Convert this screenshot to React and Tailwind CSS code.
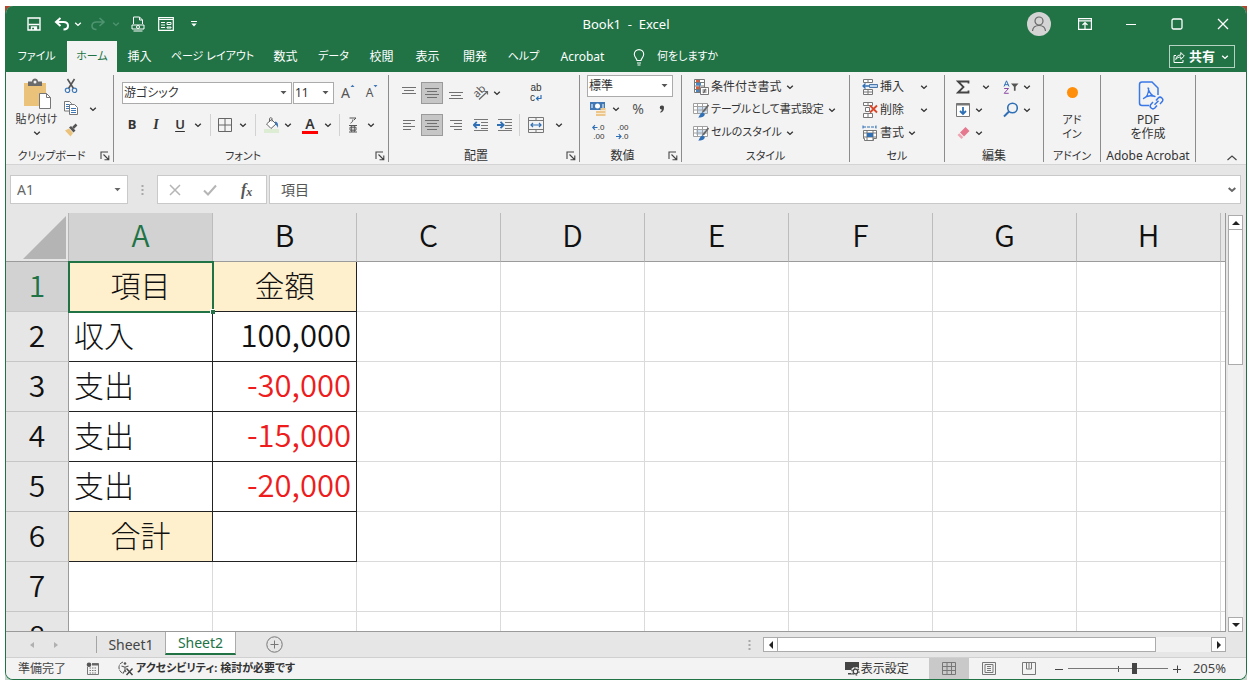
import React from "react";

const KANA = "[font-feature-settings:'palt']";

function Chevron({ className = "" }) {
  return (
    <svg className={`h-3 w-3 shrink-0 ${className}`} viewBox="0 0 12 12" fill="none" stroke="currentColor" strokeWidth="1.4" aria-hidden="true">
      <path d="M3.2 4.8 6 7.4 8.8 4.8" />
    </svg>
  );
}

function IconButton({ label, className = "w-5", children }) {
  return (
    <button type="button" aria-label={label} className={`flex h-[22px] shrink-0 items-center justify-center ${className}`}>
      {children}
    </button>
  );
}

function Drop({ label, className = "" }) {
  return (
    <IconButton label={label} className={`w-3 ${className}`}>
      <Chevron />
    </IconButton>
  );
}

function Icon({ w = 16, h = 16, className = "", children }) {
  return (
    <svg className={`shrink-0 ${className}`} width={w} height={h} viewBox={`0 0 ${w} ${h}`} fill="none" aria-hidden="true">
      {children}
    </svg>
  );
}

function Combo({ label, value, className }) {
  return (
    <span className={`relative flex h-[22px] items-center border border-[#ababab] bg-white ${className}`}>
      <select aria-label={label} defaultValue={value} className={`h-full w-full appearance-none bg-transparent pl-px text-xs text-[#333] outline-none ${KANA}`}>
        <option>{value}</option>
      </select>
      <svg className="pointer-events-none absolute right-1 h-1 w-[7px]" viewBox="0 0 7 4" fill="#555" aria-hidden="true">
        <path d="M0.5 0h6L3.5 3.2z" />
      </svg>
    </span>
  );
}

function Group({ label, className, launcher, labelSize = "text-xs", children }) {
  return (
    <section className={`flex shrink-0 flex-col border-r border-[#8c8c8c] ${className}`}>
      <div className="flex-1">{children}</div>
      <div className="flex h-3 items-center">
        <h2 className={`flex-1 whitespace-nowrap text-center leading-3 ${labelSize} ${KANA}`}>{label}</h2>
        {launcher && (
          <button type="button" aria-label={`${label}の設定`} className="flex w-4 justify-center">
            <Icon w={10} h={10}>
              <path d="M1 8V1h7M3.5 3.5 8.5 8.5M8.8 4.5v4.3H4.5" stroke="#444" strokeWidth="1.1" />
            </Icon>
          </button>
        )}
      </div>
    </section>
  );
}

function Sep({ className }) {
  return <span className={`h-[22px] w-px shrink-0 bg-[#d2d2d2] ${className}`} />;
}

function Lines({ w, rows }) {
  return (
    <Icon w={w} h={14}>
      {rows.map(([x1, x2, y]) => (
        <path key={y} d={`M${x1} ${y}.5H${x2}`} stroke="#707070" />
      ))}
    </Icon>
  );
}

function TitleBar() {
  return (
    <header className="grid h-[35px] grid-cols-[1fr_auto_1fr] items-center text-white">
      <div className="flex items-center pl-[18px]">
        <IconButton label="上書き保存" className="w-5">
          <Icon w={14} h={14}>
            <path d="M1 1h12v12H1z" stroke="#fff" strokeWidth="1.4" />
            <path d="M1.500 7.500h11M4.500 13V10h5v3" stroke="#fff" strokeWidth="1.300" />
            <path d="M7 10h2v3H7z" fill="#fff" />
          </Icon>
        </IconButton>
        <IconButton label="元に戻す" className="ml-2 w-5">
          <Icon w={16} h={14}>
            <path d="M6.5 1 2 5l4.500 4M2.500 5H9.500c3 0 4.500 1.800 4.500 3.800S12.500 12.500 9.500 12.500" stroke="#fff" strokeWidth="2" />
          </Icon>
        </IconButton>
        <Drop label="元に戻す履歴" />
        <IconButton label="やり直し" className="ml-1 w-5 text-[#4f9470]">
          <Icon w={16} h={14}>
            <path d="M9.500 1 14 5l-4.500 4M13.500 5H6.500C3.500 5 2 6.800 2 8.800s1.500 3.700 4.500 3.700" stroke="currentColor" strokeWidth="1.600" />
          </Icon>
        </IconButton>
        <Drop label="やり直し履歴" className="ml-0.5 text-[#4f9470]" />
        <IconButton label="印刷プレビュー" className="ml-1.5 w-5">
          <Icon w={14} h={16}>
            <path d="M2.500 8V1h6l3 3v4M8.500 1v3h3M2.500 15h9" stroke="#fff" />
            <path d="M1 9h12v4H1z" stroke="#fff" />
            <circle cx="7" cy="11" r="1.500" stroke="#fff" />
          </Icon>
        </IconButton>
        <IconButton label="フォーム" className="ml-2 w-5">
          <Icon w={16} h={14}>
            <path d="M.7.7h14.600v12.600H.7z" stroke="#fff" strokeWidth="1.200" />
            <path d="M1 2.500h14M3 5.500h4M3 8h4M3 10.500h4M9 5.500h4v2H9zM9 10h4v1H9z" stroke="#fff" />
          </Icon>
        </IconButton>
        <IconButton label="クイックアクセスのカスタマイズ" className="ml-2 w-5">
          <Icon w={6} h={6}>
            <path d="M0 .5h6" stroke="#fff" />
            <path d="M.3 2.500h5.400L3 5.500z" fill="#fff" />
          </Icon>
        </IconButton>
      </div>
      <h1 className="whitespace-pre pt-0.5 text-[13px]">Book1  -  Excel</h1>
      <div className="flex items-center justify-end">
        <button type="button" aria-label="アカウント" className="mr-[11px] flex h-6 w-6 items-center justify-center rounded-full bg-[#d4d4d4]">
          <Icon w={16} h={16}>
            <circle cx="8" cy="5" r="4" stroke="#666" strokeWidth="1.200" />
            <path d="M1.500 15c.3-3.500 2.800-5.500 6.500-5.500s6.200 2 6.500 5.500" stroke="#666" strokeWidth="1.200" />
          </Icon>
        </button>
        <IconButton label="リボンの表示オプション" className="w-[46px]">
          <Icon w={14} h={12}>
            <path d="M.6.6h12.800v10.800H.6zM.6 2.800h12.800M7 11V5M4.500 7 7 4.600 9.500 7" stroke="#fff" strokeWidth="1.200" />
          </Icon>
        </IconButton>
        <IconButton label="最小化" className="w-[46px]">
          <Icon w={12} h={12}><path d="M1 6.500h10" stroke="#fff" strokeWidth="1.200" /></Icon>
        </IconButton>
        <IconButton label="最大化" className="w-[46px]">
          <Icon w={12} h={12}><rect x="1" y="1" width="10" height="10" rx="1.500" stroke="#fff" strokeWidth="1.300" /></Icon>
        </IconButton>
        <IconButton label="閉じる" className="w-[46px]">
          <Icon w={12} h={12}><path d="m1 1 10 10M11 1 1 11" stroke="#fff" strokeWidth="1.300" /></Icon>
        </IconButton>
      </div>
    </header>
  );
}

const TABS = [
  ["ファイル", "w-[61px] text-[11px]"],
  ["ホーム", "w-[50px] bg-[#f3f3f3] text-[#217346] text-[11px]"],
  ["挿入", "w-[45px] text-xs"],
  ["ページ レイアウト", "w-[101px] text-[11px]"],
  ["数式", "w-[45px] text-xs"],
  ["データ", "w-[51px] text-[11px]"],
  ["校閲", "w-[45px] text-xs"],
  ["表示", "w-[47px] text-xs"],
  ["開発", "w-[48px] text-xs"],
  ["ヘルプ", "w-[49px] text-[11px]"],
  ["Acrobat", "w-[69px] text-xs"],
];

function TabStrip() {
  return (
    <nav className="flex h-[31px] items-stretch text-white">
      {TABS.map(([name, cls]) => (
        <button key={name} type="button" className={`shrink-0 whitespace-nowrap ${KANA} ${cls}`}>
          {name}
        </button>
      ))}
      <button type="button" className={`ml-4 flex shrink-0 items-center gap-3 text-[11px] ${KANA}`}>
        <Icon w={12} h={18}>
          <path d="M4 12.500c0-2-2.700-3-2.700-6.200a4.700 4.700 0 0 1 9.400 0c0 3.200-2.700 4.200-2.700 6.200zM4 15h4M4.500 17h3" stroke="#fff" strokeWidth="1.100" />
        </Icon>
        何をしますか
      </button>
      <button type="button" className="my-1 ml-auto mr-[11px] flex w-[66px] shrink-0 items-center justify-center gap-1 border border-[#b5d2c2] text-[13px] font-bold">
        <Icon w={12} h={12}>
          <path d="M3 4.500H1v7h9V9M2.800 8.500c.4-3 2-4.500 5-4.500V1.500L11.300 5 7.800 8.300V6C5.500 6 4 6.700 2.800 8.500z" stroke="#fff" />
        </Icon>
        共有
        <Chevron />
      </button>
    </nav>
  );
}

function Clipboard() {
  return (
    <Group label="クリップボード" labelSize="text-[11px]" launcher className="w-[108px]">
      <div className="flex pl-2">
        <button type="button" className={`flex w-[45px] flex-col items-center pt-[3px] text-[11px] ${KANA}`}>
          <Icon w={28} h={31}>
            <path d="M1 5h22v23H1z" fill="#eac27a" />
            <path d="M5 8V3.500h4C9 1.500 10.500.5 12 .5s3 1 3 3h4V8z" fill="#6b6b6b" />
            <circle cx="12" cy="4" r="1.500" fill="#f3f3f3" />
            <path d="M16.500 15.500h7l4 4v11h-11z" fill="#fff" stroke="#777" />
            <path d="M23.500 15.500v4h4" stroke="#777" />
          </Icon>
          <span className="mt-0.5 whitespace-nowrap leading-4">貼り付け</span>
          <Chevron />
        </button>
        <div className="ml-0.5 flex flex-col">
          <IconButton label="切り取り" className="w-5">
            <Icon w={14} h={16}>
              <path d="M3.500 1 9.500 10.500M10.500 1 4.500 10.500" stroke="#555" strokeWidth="1.600" />
              <circle cx="3.500" cy="12.300" r="2.200" stroke="#3f78b5" strokeWidth="1.200" />
              <circle cx="10.500" cy="12.300" r="2.200" stroke="#3f78b5" strokeWidth="1.200" />
            </Icon>
          </IconButton>
          <IconButton label="コピー" className="w-5">
            <Icon w={14} h={14}>
              <path d="M.5.5h5l2 2v7.500h-7z" fill="#fff" stroke="#777" />
              <path d="M2 3.500h3M2 5.500h3M2 7.500h3" stroke="#3f78b5" />
              <path d="M5.500 3.500h5l3 3v7h-8z" fill="#fff" stroke="#777" />
              <path d="M7 7.500h5M7 9.500h5M7 11.500h5" stroke="#3f78b5" />
            </Icon>
          </IconButton>
          <IconButton label="書式のコピー" className="w-5">
            <Icon w={14} h={14}>
              <path d="M1 7.500 5 5.500 9 10 6.500 13.500z" fill="#eac27a" />
              <path d="m5 4.500 2-1.500 4.500 4.500L9.500 9.500z" fill="#555" />
              <path d="m9 5 3.500-3.500" stroke="#555" strokeWidth="2.500" />
            </Icon>
          </IconButton>
        </div>
        <Drop label="コピーのオプション" className="ml-1.5 mt-[23px]" />
      </div>
    </Group>
  );
}

function FontGroup() {
  return (
    <Group label="フォント" labelSize="text-[11px]" launcher className="w-[275px]">
      <div className="flex items-center pl-2 pt-[7px]">
        <Combo label="フォント名" value="游ゴシック" className="w-[170px]" />
        <Combo label="フォント サイズ" value="11" className="ml-px w-[41px]" />
        <IconButton label="フォント サイズの拡大" className="ml-1 w-5">
          <span className="text-sm text-[#555]">A</span>
          <Icon w={5} h={10} className="self-start"><path d="M.5 5 2.500 2.800 4.500 5" fill="#3f78b5" /></Icon>
        </IconButton>
        <IconButton label="フォント サイズの縮小" className="ml-1 w-5">
          <span className="text-xs text-[#555]">A</span>
          <Icon w={5} h={10} className="self-start"><path d="M.5 3 2.500 5.200 4.500 3" fill="#3f78b5" /></Icon>
        </IconButton>
      </div>
      <div className="flex items-center pl-1.5 pt-2.5">
        <IconButton label="太字" className="w-6 text-[13px] font-bold">B</IconButton>
        <IconButton label="斜体" className="w-6 font-['Liberation_Serif',serif] text-sm font-bold italic">I</IconButton>
        <IconButton label="下線" className="w-6 text-[13px] font-semibold underline underline-offset-2">U</IconButton>
        <Drop label="下線の種類" />
        <Sep className="mx-1.5" />
        <IconButton label="罫線" className="w-4">
          <Icon w={14} h={14}><path d="M.5.5h13v13H.5zM7 .5v13M.5 7h13" stroke="#666" /></Icon>
        </IconButton>
        <Drop label="罫線の種類" className="ml-1" />
        <Sep className="mx-1.5" />
        <IconButton label="塗りつぶしの色" className="w-5">
          <Icon w={16} h={16}>
            <path d="M0 12h15v4H0z" fill="#dcedd3" />
            <path d="m2.500 7 5-4.500 4.500 4.500-5 4.500z" fill="#fff" stroke="#666" />
            <path d="M5.500 5V1.500c0-1 2.500-1 2.500 0v3" stroke="#666" />
            <path d="M11 4.500c2.500.5 3.500 2 3 6.500-1-2-2-3.500-3-4z" fill="#3f78b5" />
          </Icon>
        </IconButton>
        <Drop label="塗りつぶしの色の一覧" />
        <IconButton label="フォントの色" className="ml-1.5 w-5 flex-col">
          <span className="text-sm font-semibold leading-[14px]">A</span>
          <span className="h-[3px] w-4 bg-[#f00]" />
        </IconButton>
        <Drop label="フォントの色の一覧" className="ml-0.5" />
        <Sep className="mx-[5px]" />
        <IconButton label="ふりがな" className="w-4">
          <Icon w={10} h={16}>
            <path d="M1.500 1h6.500L5.800 3.200M4.800 2.500c0 2-.8 3-2.300 3.800M1 8.500h8M1 15h8M3.700 8.500V15M6.300 8.500V15M2 10.200v3h6v-3z" stroke="#555" />
          </Icon>
        </IconButton>
        <Drop label="ふりがなの設定" className="ml-1" />
      </div>
    </Group>
  );
}

function Indent({ right }) {
  return (
    <Icon w={16} h={14}>
      <path d="M1 1.500h14M8 4.500h7M8 7.500h7M8 10.500h7M1 12.500h14" stroke="#777" />
      <path d={right ? "M0 7h6M3.500 3.800 6.700 7 3.500 10.200" : "M7 7H1M3.800 3.800.8 7l3 3.200"} stroke="#2f6fb5" strokeWidth="1.800" />
    </Icon>
  );
}

function Alignment() {
  return (
    <Group label="配置" launcher className="w-[191px]">
      <div className="flex items-center pl-2.5 pt-[7px]">
        <IconButton label="上揃え"><Lines w={14} rows={[[0, 14, 1], [2, 12, 4], [0, 14, 7]]} /></IconButton>
        <IconButton label="上下中央揃え" className="ml-0.5 w-[22px] border border-[#9a9a9a] bg-[#c6c6c6]"><Lines w={14} rows={[[0, 14, 2], [2, 12, 5], [0, 14, 8], [2, 12, 11]]} /></IconButton>
        <IconButton label="下揃え" className="ml-[3px] w-5"><Lines w={14} rows={[[0, 14, 6], [2, 12, 9], [0, 14, 12]]} /></IconButton>
        <IconButton label="方向" className="ml-[5px] w-5">
          <span className="relative flex h-4 w-4 items-center justify-center">
            <span className="absolute -left-px top-0 -rotate-45 text-[11px] leading-none text-[#555]">ab</span>
            <Icon w={16} h={16} className="absolute inset-0"><path d="m6 14.500 8.500-8M14.500 9.500V6.500h-3" stroke="#666" strokeWidth="1.200" /></Icon>
          </span>
        </IconButton>
        <Drop label="方向の一覧" />
        <IconButton label="折り返して全体を表示する" className="ml-[23px] w-5 flex-col font-['Liberation_Sans',sans-serif] text-[10px]">
          <span className="leading-[10px]">ab</span>
          <span className="flex items-center leading-[10px]">
            c
            <Icon w={7} h={7}><path d="M6 0v3.500H1.500M3.500 1.500l-2 2 2 2" stroke="#2f6fb5" strokeWidth="1.200" /></Icon>
          </span>
        </IconButton>
      </div>
      <div className="flex items-center pl-2.5 pt-2.5">
        <IconButton label="左揃え"><Lines w={12} rows={[[0, 12, 2], [0, 8, 5], [0, 12, 8], [0, 8, 11]]} /></IconButton>
        <IconButton label="中央揃え" className="ml-0.5 w-[22px] border border-[#9a9a9a] bg-[#c6c6c6]"><Lines w={14} rows={[[0, 14, 2], [2, 12, 5], [0, 14, 8], [2, 12, 11]]} /></IconButton>
        <IconButton label="右揃え" className="ml-[3px] w-5"><Lines w={12} rows={[[0, 12, 2], [4, 12, 5], [0, 12, 8], [4, 12, 11]]} /></IconButton>
        <IconButton label="インデントを減らす" className="ml-[5px] w-5"><Indent /></IconButton>
        <IconButton label="インデントを増やす" className="ml-1 w-5"><Indent right /></IconButton>
        <Sep className="ml-1 mr-1.5" />
        <IconButton label="セルを結合して中央揃え">
          <Icon w={16} h={16}>
            <path d="M.5.5h15v15H.5zM.5 3.500h15M.5 12.500h15M8 .5v3M8 12.500v3" stroke="#777" />
            <path d="M3 8h10M5 6 3 8l2 2M11 6l2 2-2 2" stroke="#2f6fb5" strokeWidth="1.200" />
          </Icon>
        </IconButton>
        <Drop label="セルの結合の一覧" className="ml-[7px]" />
      </div>
    </Group>
  );
}

function Decimals({ more }) {
  const arrow = (
    <Icon w={6} h={7}>
      <path d={more ? "M5.500 3.500H1M3 1.200.8 3.500 3 5.800" : "M0 3.500h4.500M2.800 1.200 5 3.500 2.800 5.800"} stroke="#2f6fb5" strokeWidth="1.200" />
    </Icon>
  );
  return (
    <span className="flex flex-col items-end font-['Liberation_Sans',sans-serif] text-[8px] leading-[9px]">
      <span className="flex items-center">{more && arrow}{more ? ".0" : ".00"}</span>
      <span className="flex items-center">{!more && arrow}{more ? ".00" : ".0"}</span>
    </span>
  );
}

function NumberGroup() {
  return (
    <Group label="数値" launcher className="w-[102px]">
      <div className="pl-[7px]">
        <Combo label="表示形式" value="標準" className="w-[86px]" />
      </div>
      <div className="flex items-center pl-2 pt-px">
        <IconButton label="通貨表示形式">
          <Icon w={16} h={16}>
            <path d="M0 1h15v8H0z" fill="#3f78b5" />
            <ellipse cx="7.500" cy="5" rx="2.500" ry="2.500" fill="#fff" />
            <path d="M2 3v4M13 3v4" stroke="#fff" />
            <path d="M6 10h5v5H6zM10.500 7h5v8h-5z" fill="#ecc68a" />
            <path d="M6 12.500h9.500M10.500 9.500h5" stroke="#f7ead3" />
          </Icon>
        </IconButton>
        <Drop label="通貨の一覧" className="ml-0.5" />
        <IconButton label="パーセント スタイル" className="ml-1 w-6 text-sm text-[#555]">%</IconButton>
        <IconButton label="桁区切りスタイル" className="w-6">
          <Icon w={6} h={8}><path d="M2.800.5a2 2 0 0 1 2.200 2.200C5 5.200 3.800 7 1.500 7.800L1.200 7C2.300 6.300 2.800 5.500 2.800 4.600A2 2 0 0 1 2.800.5z" fill="#444" /></Icon>
        </IconButton>
      </div>
      <div className="flex items-center pl-2 pt-px">
        <IconButton label="小数点以下の表示桁数を増やす"><Decimals more /></IconButton>
        <IconButton label="小数点以下の表示桁数を減らす" className="ml-1 w-5"><Decimals /></IconButton>
      </div>
    </Group>
  );
}

function Command({ icon, chevron = "", size = "text-xs", children }) {
  return (
    <button type="button" className={`flex h-[23px] items-center gap-0.5 whitespace-nowrap ${size} ${KANA}`}>
      {icon}
      {children}
      <Chevron className={chevron} />
    </button>
  );
}

const condIcon = (
  <Icon>
    <path d="M1.500.5h10v13h-10zM1.500 3.500h10M1.500 7h10M1.500 10.500h10M6.500.5v13" stroke="#777" fill="#fff" />
    <path d="M3 1h3v2H3zM3 7.500h3v2.500H3z" fill="#e0583a" />
    <path d="M3 4h5v2.500H3zM3 11h3v2H3z" fill="#4a86c5" />
    <path d="M7.500 8.500h8v7h-8z" fill="#fff" stroke="#777" />
    <path d="M9.500 11h4M9.500 13h4M12.500 9.800l-2 4.400" stroke="#555" />
  </Icon>
);

function BrushTable({ fill }) {
  return (
    <Icon>
      <path d="M.5 1.500h14v10H.5z" fill="#fff" />
      <path d={fill ? "M3 4h9v6H3z" : "M5 4h9v7H5z"} fill="#cfe0f1" />
      <path d="M.5 1.500h14v10H.5zM.5 4.500h14M.5 8h14M4.500 1.500v10M9.500 1.500v10" stroke="#a0a0a0" />
      <path d="m15.500 3-5.500 7" stroke="#666" strokeWidth="1.800" />
      <path d="M5 15.500c1.500-.5 1.500-3.800 4.300-5.300l2.500 1.800c0 3-3.800 3.500-6.800 3.500z" fill="#2f6fb5" />
    </Icon>
  );
}

const insertIcon = (
  <Icon>
    <path d="M1.500.5h9v3h-9zM6 .5v3M1.500 10.500h9v5h-9zM1.500 13h9M6 10.500v5" stroke="#777" fill="#fff" />
    <path d="M7.500 5.500h8v3h-8z" fill="#bcd4ee" stroke="#4a78aa" />
    <path d="M7 7H1M3.500 4.500 1 7l2.500 2.500" stroke="#2f6fb5" strokeWidth="1.300" />
  </Icon>
);
const deleteIcon = (
  <Icon>
    <path d="M1.500.5h9v3h-9zM6 .5v3M1.500 11.500h9v4h-9zM6 11.500v4M3.500 5.500h4v4h-4z" stroke="#777" fill="#fff" />
    <path d="m8 3.500 7 7M15 3.500l-7 7" stroke="#d9472b" strokeWidth="1.800" />
  </Icon>
);
const formatIcon = (
  <Icon>
    <path d="M1 2h13M1 .5v3M14 .5v3" stroke="#2f6fb5" strokeDasharray="3 1" />
    <path d="M1.500 5.500h13v8h-3v2h-9v-2h-1z" fill="#fff" />
    <path d="M1.500 5.500h13v8h-3v2h-9v-2h-1zM1.500 8h13M1.500 12h13M5 5.500v10M11 5.500v10" stroke="#777" />
    <path d="M5 8h6v4H5z" fill="#2f6fb5" />
  </Icon>
);

function Styles() {
  return (
    <Group label="スタイル" labelSize="text-[11px]" className="w-[168px]">
      <div className="flex flex-col items-start pl-[11px]">
        <Command icon={condIcon}>条件付き書式</Command>
        <Command icon={<BrushTable />} size="text-[11px]">テーブルとして書式設定</Command>
        <Command icon={<BrushTable fill />} size="text-[11px]">セルのスタイル</Command>
      </div>
    </Group>
  );
}

function Cells() {
  return (
    <Group label="セル" labelSize="text-[11px]" className="w-[95px]">
      <div className="flex flex-col items-start pl-3">
        <Command icon={insertIcon} chevron="ml-3">挿入</Command>
        <Command icon={deleteIcon} chevron="ml-3">削除</Command>
        <Command icon={formatIcon}>書式</Command>
      </div>
    </Group>
  );
}

function Editing() {
  return (
    <Group label="編集" className="w-[99px]">
      <div className="flex h-[23px] items-center pl-2">
        <IconButton label="オート SUM">
          <Icon w={14} h={14}><path d="M12.500 3.500V1.500H2L7.500 7 2 12.500h10.500v-2" stroke="#444" strokeWidth="1.800" /></Icon>
        </IconButton>
        <Drop label="オート SUM の一覧" className="ml-[7px]" />
        <IconButton label="並べ替えとフィルター" className="ml-[9px] w-5">
          <Icon w={16} h={14}>
            <path d="M1 6.500 3.500.8 6 6.500M1.800 4.700h3.400" stroke="#2f6fb5" />
            <path d="M1.200 8.500h4.300L1.200 13.300h4.500" stroke="#8a4aa5" />
            <path d="M8 3.500h7.500L12.600 6.700v4h-1.700v-4z" fill="#555" />
          </Icon>
        </IconButton>
        <Drop label="並べ替えの一覧" />
      </div>
      <div className="flex h-[23px] items-center pl-2">
        <IconButton label="フィル">
          <Icon w={14} h={14}>
            <path d="M.5.5h13v13H.5z" fill="#fff" stroke="#777" />
            <path d="M.5 1.500h13" stroke="#777" strokeWidth="2" />
            <path d="M7 4v7M4 8l3 3 3-3" stroke="#2f6fb5" strokeWidth="1.800" />
          </Icon>
        </IconButton>
        <Drop label="フィルの一覧" />
        <IconButton label="検索と選択" className="ml-4 w-5">
          <Icon><circle cx="9.500" cy="6" r="4.800" stroke="#2f6fb5" strokeWidth="1.600" /><path d="m6 9.500-5 5" stroke="#2f6fb5" strokeWidth="2" /></Icon>
        </IconButton>
        <Drop label="検索の一覧" />
      </div>
      <div className="flex h-[23px] items-center pl-2">
        <IconButton label="クリア">
          <Icon w={14} h={14}>
            <path d="M9.500 1 13.500 5 8 10.500 4 6.500z" fill="#e5788e" />
            <path d="M3.300 7.200 7.300 11.200 5.500 13 1.500 9z" fill="#f0a5b3" />
          </Icon>
        </IconButton>
        <Drop label="クリアの一覧" />
      </div>
    </Group>
  );
}

function Ribbon() {
  return (
    <div className="flex h-[93px] border-b border-[#d4d4d4] bg-[#f3f3f3] pb-0.5 pt-[3px] text-[#333]">
      <Clipboard />
      <FontGroup />
      <Alignment />
      <NumberGroup />
      <Styles />
      <Cells />
      <Editing />
      <Group label="アドイン" labelSize="text-[11px]" className="w-[57px]">
        <button type="button" className={`flex w-full flex-col items-center pt-3 text-[11px] leading-[14px] ${KANA}`}>
          <span className="mb-[15px] h-[11px] w-[11px] rounded-full bg-[#ff8f0a]" />
          <span>アド</span>
          <span>イン</span>
        </button>
      </Group>
      <Group label="Adobe Acrobat" className="w-[95px]">
        <button type="button" className={`flex w-full flex-col items-center pt-1.5 text-xs leading-[14px] ${KANA}`}>
          <Icon w={26} h={30} className="mb-0.5 ml-1.5">
            <path d="M11 24.500H4c-1.500 0-2.500-1-2.500-2.500V3.500C1.500 2 2.500 1 4 1h10l6 6v7" stroke="#3b78e7" strokeWidth="1.500" />
            <path d="M10 7c1.500 5 3.500 8 7 8.500M5.500 17.500c3-1 5-5 5.200-10M5.500 17.500c2.500-2.500 6.500-3.500 11.500-2" stroke="#3b78e7" strokeWidth="1.300" strokeLinecap="round" />
            <path d="m18 19.500 2.200-2.500a2.700 2.700 0 0 1 4 3.600L22 23M19 24.500l-2.200 2.500a2.700 2.700 0 0 1-4-3.600L15 21M16.500 23.800l4-4" stroke="#3b78e7" strokeWidth="1.500" />
          </Icon>
          <span>PDF</span>
          <span>を作成</span>
        </button>
      </Group>
      <button type="button" aria-label="リボンを折りたたむ" className="ml-auto mr-2 self-end">
        <Icon w={12} h={8}><path d="m1.500 6 4.500-4 4.500 4" stroke="#444" strokeWidth="1.200" /></Icon>
      </button>
    </div>
  );
}

function Dots() {
  return (
    <Icon w={3} h={12}>
      <path d="M.5 1h2v2h-2zM.5 5h2v2h-2zM.5 9h2v2h-2z" fill="#a8a8a8" />
    </Icon>
  );
}

function FormulaBar() {
  return (
    <div className="flex h-12 items-start bg-[#e6e6e6] pl-1 pr-[5px] pt-2.5 text-[#555]">
      <span className="relative flex h-[29px] w-[118px] shrink-0 items-center border border-[#c9c9c9] bg-white">
        <input aria-label="名前ボックス" defaultValue="A1" className="w-full bg-transparent pl-1.5 text-sm text-[#666] outline-none" />
        <svg className="absolute right-1.5 h-1 w-[7px]" viewBox="0 0 7 4" fill="#666" aria-hidden="true"><path d="M.5 0h6l-3 3.200z" /></svg>
      </span>
      <span className="flex h-[29px] w-[29px] shrink-0 items-center justify-center"><Dots /></span>
      <div className="flex h-[29px] w-[110px] shrink-0 items-center justify-around border border-[#c9c9c9] bg-white">
        <IconButton label="キャンセル"><Icon w={12} h={12}><path d="m1 1 10 10M11 1 1 11" stroke="#b5b5b5" strokeWidth="1.500" /></Icon></IconButton>
        <IconButton label="入力"><Icon w={14} h={12}><path d="m1 6.500 4 4L13 1.500" stroke="#b5b5b5" strokeWidth="2" /></Icon></IconButton>
        <IconButton label="関数の挿入" className="w-6 font-['Liberation_Serif',serif] text-base font-bold italic">
          f<span className="pt-1 text-xs">x</span>
        </IconButton>
      </div>
      <span className="relative ml-0.5 flex h-[29px] flex-1 items-center border border-[#c9c9c9] bg-white">
        <input aria-label="数式バー" defaultValue="項目" className="w-full bg-transparent pl-[11px] text-sm outline-none" />
        <svg className="absolute right-1 h-1.5 w-2" viewBox="0 0 8 6" fill="none" stroke="#666" strokeWidth="2" aria-hidden="true"><path d="m.7 1 3.300 3L7.300 1" /></svg>
      </span>
    </div>
  );
}

const COLUMNS = ["A", "B", "C", "D", "E", "F", "G", "H"];
const ROWS = [
  ["項目", "金額"],
  ["収入", "100,000"],
  ["支出", "-30,000"],
  ["支出", "-15,000"],
  ["支出", "-20,000"],
  ["合計", ""],
  ["", ""],
  ["", ""],
];

function cellClass(r, c) {
  const text = ROWS[r][c];
  const heading = r === 0 || (r === 5 && c === 0);
  const line = r < 6 ? "border-[#222]" : "border-[#dadada]";
  const fill = heading ? "bg-[#fff0cd] text-center" : c === 0 ? "pl-[5px] text-left" : "pr-[5px] text-right text-[31px] font-[350]";
  const color = text.startsWith("-") ? "text-[#ee1c1c]" : "text-[#111]";
  return `relative border-b border-r pb-1.5 ${line} ${fill} ${color}`;
}

function Sheet() {
  return (
    <div className="min-w-0 flex-1 overflow-hidden border-b border-r border-[#9a9a9a] bg-white">
      <table className="w-full table-fixed border-separate border-spacing-0 font-['Noto_Sans_CJK_JP',sans-serif] text-[30px] font-light leading-none">
        <colgroup>
          <col className="w-[63px]" />
          {COLUMNS.map((c) => <col key={c} className="w-36" />)}
          <col />
        </colgroup>
        <thead>
          <tr className="h-[49px] bg-[#e6e6e6]">
            <th className="border-b border-r border-b-[#9b9b9b] border-r-[#b5b5b5] p-0">
              <svg className="ml-auto mr-0.5 h-[43px] w-[43px]" viewBox="0 0 43 43" fill="#b4b4b4" aria-hidden="true"><path d="M43 0v43H0z" /></svg>
            </th>
            {COLUMNS.map((c) => (
              <th key={c} scope="col" className={`border-b border-r border-b-[#9b9b9b] border-r-[#bcbcbc] pb-1.5 font-[350] ${c === "A" ? "bg-[#d2d2d2] text-[#217346]" : "text-[#111]"}`}>{c}</th>
            ))}
            <th className="border-b border-[#9b9b9b] p-0" />
          </tr>
        </thead>
        <tbody>
          {ROWS.map((row, r) => (
            <tr key={r} className="h-[50px]">
              <th scope="row" className={`border-b border-r border-b-[#c6c6c6] border-r-[#9b9b9b] pb-1.5 font-[350] ${r === 0 ? "bg-[#d2d2d2] text-[#217346]" : "bg-[#e6e6e6] text-[#111]"}`}>{r + 1}</th>
              {row.map((text, c) => (
                <td key={c} className={cellClass(r, c)}>
                  {text}
                  {r === 0 && c === 0 && (
                    <span className="absolute -bottom-[2px] -left-px -right-[2px] -top-px z-10 border-2 border-[#217346]">
                      <span className="absolute -bottom-[3px] -right-[3px] h-[5px] w-[5px] border-l border-t border-white bg-[#217346]" />
                    </span>
                  )}
                </td>
              ))}
              {COLUMNS.slice(2).map((c) => <td key={c} className="border-b border-r border-[#dadada] p-0" />)}
              <td className="border-b border-[#dadada] p-0" />
            </tr>
          ))}
        </tbody>
      </table>
    </div>
  );
}

function ScrollButton({ label, d }) {
  return (
    <button type="button" aria-label={label} className="flex h-[15px] w-[15px] shrink-0 items-center justify-center border border-[#ababab] bg-white">
      <svg className="h-2 w-2" viewBox="0 0 8 8" fill="#222" aria-hidden="true"><path d={d} /></svg>
    </button>
  );
}

function SheetTabs() {
  return (
    <div className="flex h-[25px] shrink-0 bg-[#e6e6e6]">
      <div className="flex w-[90px] shrink-0 items-center gap-[18px] pl-[23px]">
        <button type="button" aria-label="前のシート"><Icon w={6} h={8}><path d="M5 1v6L1 4z" fill="#b0b0b0" /></Icon></button>
        <button type="button" aria-label="次のシート"><Icon w={6} h={8}><path d="M1 1v6l4-3z" fill="#b0b0b0" /></Icon></button>
      </div>
      <span className="my-1 w-px bg-[#a5a5a5]" />
      <button type="button" className="w-[68px] shrink-0 text-sm text-[#444]">Sheet1</button>
      <button type="button" className="mb-0.5 w-[71px] shrink-0 border-x border-b-2 border-x-[#ababab] border-b-[#217346] bg-white text-sm text-[#217346]">Sheet2</button>
      <button type="button" aria-label="新しいシート" className="ml-[30px] flex shrink-0 items-center">
        <Icon w={17} h={17}><circle cx="8.500" cy="8.500" r="7.700" stroke="#777" /><path d="M8.500 4.500v8M4.500 8.500h8" stroke="#777" /></Icon>
      </button>
      <div className="ml-auto flex w-[478px] items-center">
        <Dots />
        <div className="ml-3 flex flex-1 items-center bg-[#f1f1f1]">
          <ScrollButton label="左へスクロール" d="M6 0v8L2 4z" />
          <span className="-ml-px h-[15px] w-[379px] border border-[#ababab] bg-white" />
          <span className="flex-1" />
          <ScrollButton label="右へスクロール" d="M2 0v8l4-4z" />
        </div>
      </div>
      <span className="w-5" />
    </div>
  );
}

function StatusBar() {
  return (
    <footer className="flex h-[22px] shrink-0 items-center border-t border-[#d0d0d0] bg-[#f3f3f3] text-xs text-[#444]">
      <span className="pl-3">準備完了</span>
      <button type="button" aria-label="マクロの記録" className="ml-5">
        <Icon w={14} h={13}>
          <path d="M1.500 5v7.500h11v-11H6" stroke="#777" />
          <circle cx="3" cy="2.800" r="2.300" fill="#555" />
          <path d="M6 2.500h6.500" stroke="#666" strokeWidth="2" />
          <path d="M3.500 6h7.500M3.500 8.500h7.500M3.500 11h7.500" stroke="#777" strokeDasharray="1.500 1" />
        </Icon>
      </button>
      <button type="button" className={`ml-[18px] flex items-center whitespace-nowrap text-[11px] font-bold text-[#333] ${KANA}`}>
        <Icon w={16} h={15} className="mr-0.5">
          <path d="M5 1C2 2 .8 4.500 1 7s1.800 4.500 4 5.200" stroke="#555" strokeDasharray="4 1" />
          <circle cx="7" cy="2.500" r="1.300" fill="#555" />
          <path d="M3.500 5 7 6.200 10.500 5M7 6v3l-2 3.500M7 9l1 2" stroke="#555" strokeWidth="1.100" />
          <path d="m8.500 7.500 6 6.500M14.500 7.500l-6 6.500" stroke="#444" strokeWidth="1.500" />
        </Icon>
        アクセシビリティ: 検討が必要です
      </button>
      <button type="button" className="ml-auto flex items-center text-[#333]">
        <Icon w={17} h={15}>
          <path d="M1 1h14v8H1zM4 12h5v1.500H4z" fill="#444" />
          <circle cx="11.500" cy="10.500" r="4.500" fill="#f3f3f3" />
          <circle cx="11.500" cy="10.500" r="2.300" stroke="#444" strokeWidth="1.300" />
          <circle cx="11.500" cy="10.500" r="3.600" stroke="#444" strokeWidth="1.200" strokeDasharray="1.500 2.270" />
        </Icon>
        表示設定
      </button>
      <button type="button" aria-label="標準" className="ml-5 flex h-full w-10 items-center justify-center bg-[#c9c9c9]">
        <Icon w={14} h={13}><path d="M.5.5h13v12H.5zM.5 4.500h13M.5 8.500h13M5 .5v12M9.500 .5v12" stroke="#777" /></Icon>
      </button>
      <button type="button" aria-label="ページ レイアウト" className="flex h-full w-10 items-center justify-center">
        <Icon w={14} h={13}><path d="M.5.5h13v12H.5zM3 2.500h8v8H3zM5 4.500h4M5 6.500h4M5 8.500h4" stroke="#777" /></Icon>
      </button>
      <button type="button" aria-label="改ページ プレビュー" className="flex h-full w-10 items-center justify-center">
        <Icon w={14} h={13}><path d="M.5.5h13v12H.5zM4.500 .5v6.500h5V.5M7 .5v6" stroke="#777" /></Icon>
      </button>
      <button type="button" aria-label="縮小" className="ml-0.5 flex w-4 justify-center"><Icon w={8} h={8}><path d="M0 4.500h8" stroke="#444" /></Icon></button>
      <span className="relative mx-px flex w-[100px] items-center">
        <span className="absolute left-1/2 h-1.5 w-px bg-[#555]" />
        <input
          type="range"
          aria-label="ズーム"
          min="0"
          max="100"
          defaultValue="67"
          className="relative h-px w-full appearance-none bg-[#777] [&::-webkit-slider-thumb]:h-[11px] [&::-webkit-slider-thumb]:w-[5px] [&::-webkit-slider-thumb]:appearance-none [&::-webkit-slider-thumb]:bg-[#444]"
        />
      </span>
      <button type="button" aria-label="拡大" className="flex w-4 justify-center"><Icon w={8} h={8}><path d="M0 4.500h8M4.500 .5v8" stroke="#444" /></Icon></button>
      <span className="mr-5 pl-2 text-[13px]">205%</span>
    </footer>
  );
}

export default function App() {
  return (
    <div className="h-screen overflow-hidden bg-white px-[5px] pb-[5px] pt-1.5 font-['Noto_Sans','Noto_Sans_CJK_JP',sans-serif]">
      <div className="h-full bg-linear-to-b from-[#b5432c] to-[#c5d5cb]">
        <div className="flex h-full flex-col overflow-hidden rounded-lg border-b border-l border-r border-[#217346] bg-[#e6e6e6]">
          <div className="shrink-0 bg-[#217346]">
            <TitleBar />
            <TabStrip />
          </div>
          <div className="shrink-0">
            <Ribbon />
            <FormulaBar />
          </div>
          <main className="flex min-h-0 flex-1">
            <Sheet />
            <div className="ml-0.5 mr-[3px] flex w-[15px] flex-col pt-0.5">
              <ScrollButton label="上へスクロール" d="M0 6h8L4 2z" />
              <div className="flex flex-1 flex-col bg-[#f1f1f1]">
                <span className="-mt-px h-[136px] border border-[#ababab] bg-white" />
              </div>
              <ScrollButton label="下へスクロール" d="M0 2h8L4 6z" />
            </div>
          </main>
          <SheetTabs />
          <StatusBar />
        </div>
      </div>
    </div>
  );
}
